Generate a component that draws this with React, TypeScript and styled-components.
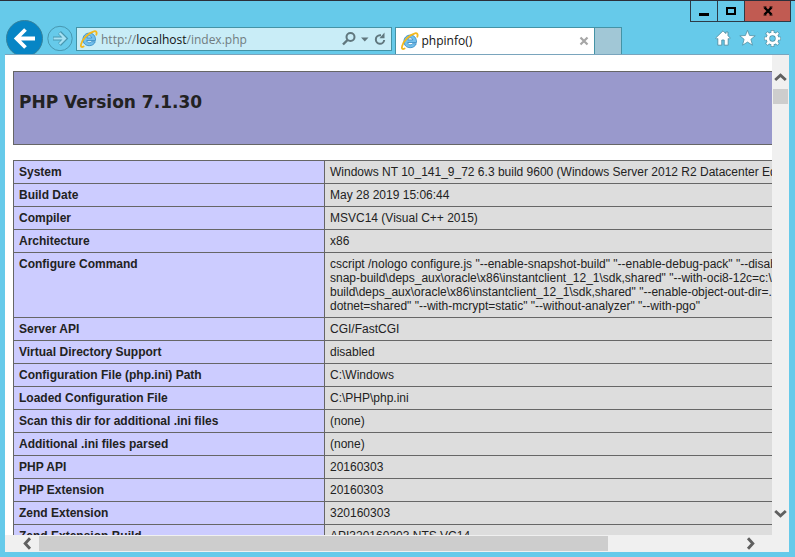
import React from "react";
import styled, { createGlobalStyle } from "styled-components";

const GlobalStyle = createGlobalStyle`
  *, *::before, *::after { box-sizing: border-box; }
  html, body { margin: 0; padding: 0; }
  body { overflow: hidden; background: #66caea; }
  button, input { font: inherit; color: inherit; margin: 0; padding: 0; border: 0; background: none; }
  svg { display: block; flex: none; }
`;

const uiFont = `"Open Sans", "Noto Sans", sans-serif`;
const pageFont = `"Liberation Sans", Arial, sans-serif`;

const Window = styled.div`
  display: flex;
  flex-direction: column;
  height: 100vh;
  padding: 0 6px 5px 5px;
  border-top: 1px solid #2b2f3a;
  background: #66caea;
  font-family: ${uiFont};
`;

const TitleBar = styled.header`
  display: flex;
  justify-content: flex-end;
  flex: none;
  height: 21px;
  margin-right: -2px;
`;

const CaptionButton = styled.button<{ $close?: boolean }>`
  display: flex;
  align-items: center;
  justify-content: center;
  width: ${(p) => (p.$close ? 47 : 28)}px;
  margin-left: -1px;
  border: 1px solid #2d3b47;
  border-top: 0;
  background: ${(p) => (p.$close ? "#c15b52" : "transparent")};
`;

const NavRow = styled.nav`
  display: flex;
  align-items: center;
  flex: none;
  height: 32px;
`;

const RoundButton = styled.button`
  display: flex;
  flex: none;
  margin-right: 3px;
`;

const AddressBar = styled.form`
  display: flex;
  align-items: center;
  align-self: flex-end;
  flex: 1 1 0;
  min-width: 0;
  height: 24px;
  margin: 0 3px 3px 0;
  padding: 0 4px 0 3px;
  border: 1px solid #4493a6;
  background: #c9edf7;
`;

const AddressField = styled.label`
  position: relative;
  flex: 1;
  min-width: 0;
  height: 22px;
  margin-left: 3px;
  font-size: 12px;
  line-height: 24px;
  color: #707c80;
`;

const AddressInput = styled.input`
  position: absolute;
  inset: 0;
  width: 100%;
  color: transparent;
  outline: none;
`;

const Host = styled.span`
  color: #111;
`;

const ToolButton = styled.button`
  display: flex;
  align-items: center;
  justify-content: center;
  flex: none;
  height: 20px;
`;

const TabStrip = styled.div`
  display: flex;
  flex: 1 1 14px;
  align-self: stretch;
  align-items: flex-end;
  min-width: 0;
`;

const Tab = styled.div`
  display: flex;
  align-items: center;
  flex: 0 1 200px;
  height: 27px;
  padding: 0 5px;
  border: 1px solid #4493a6;
  border-bottom: 0;
  background: #fff;
  font-size: 12px;
  color: #111;
`;

const TabTitle = styled.span`
  flex: 1;
  margin-left: 3px;
  line-height: 22px;
`;

const NewTab = styled.button`
  width: 27px;
  height: 27px;
  border: 1px solid #4493a6;
  border-left: 0;
  border-bottom: 0;
  background: #a1c7d6;
`;

const Tools = styled.div`
  display: flex;
  flex: none;
  gap: 8px;
  margin-right: 8px;
`;

const Content = styled.main`
  display: grid;
  grid-template-columns: minmax(0, 1fr) 17px;
  grid-template-rows: minmax(0, 1fr) 17px;
  flex: 1;
  min-height: 0;
  border-top: 1px solid #7aa5bd;
  background: #f0f0f0;
`;

const Viewport = styled.div`
  overflow: hidden;
  padding: 16px 8px;
  background: #fff;
  color: #222;
  font-family: ${pageFont};
`;

const VersionBanner = styled.header`
  width: 934px;
  height: 74px;
  padding: 17px 5px;
  border: 1px solid #666;
  background: #9999cc;
`;

const Heading = styled.h1`
  margin: 0;
  font-family: "DejaVu Sans", ${pageFont};
  font-size: 17px;
  font-weight: 700;
  line-height: 26px;
`;

const InfoTable = styled.table`
  width: 934px;
  margin-top: 15px;
  border-collapse: collapse;
  table-layout: fixed;
  font-size: 12px;
  line-height: 14px;
`;

const NameCell = styled.th`
  width: 311px;
  padding: 4px 5px;
  border: 1px solid #666;
  background: #ccccff;
  font-weight: 700;
  text-align: left;
  vertical-align: top;
`;

const ValueCell = styled.td`
  padding: 4px 5px;
  border: 1px solid #666;
  background: #ddd;
  vertical-align: top;
  white-space: pre;
`;

const Scrollbar = styled.div<{ $vertical?: boolean }>`
  display: flex;
  flex-direction: ${(p) => (p.$vertical ? "column" : "row")};
  padding: ${(p) => (p.$vertical ? "10px 1px" : "1px 10px")};
`;

const ScrollButton = styled.button<{ $vertical?: boolean }>`
  display: flex;
  align-items: center;
  justify-content: center;
  flex: none;
  width: ${(p) => (p.$vertical ? 15 : 24)}px;
  height: ${(p) => (p.$vertical ? 24 : 15)}px;
`;

const Track = styled.div<{ $vertical?: boolean }>`
  display: flex;
  flex-direction: ${(p) => (p.$vertical ? "column" : "row")};
  flex: 1;
`;

const Thumb = styled.div<{ $vertical?: boolean }>`
  flex: none;
  width: ${(p) => (p.$vertical ? "15px" : "81.4%")};
  height: 15px;
  background: #cdcdcd;
`;

const BrowserLogo = () => (
  <svg width="18" height="18" viewBox="0 0 18 18" aria-hidden="true">
    <path
      d="M15.3 11.7C14.2 14.3 12 15.7 9.2 15.7c-3.7 0-6.3-2.6-6.3-6.2 0-3.7 2.7-6.4 6.4-6.4 3.9 0 6.4 2.8 6.2 7.4H6.8c.1 1.4 1 2.3 2.5 2.3 1 0 1.8-.4 2.2-1.1zM6.9 7.9h4.8c-.2-1.3-1.1-2.1-2.4-2.1s-2.2.8-2.4 2.1z"
      fill="#74c0ec"
      stroke="#2f86c2"
      strokeWidth="0.8"
      fillRule="evenodd"
    />
    <path
      d="M3.6 16.5C1.5 17.6.5 16.7 1 14.5 2 9.5 8.6 2.500 14 1.300c2.300-.4 3.200.9 2.300 3.400"
      fill="none"
      stroke="#f3b81d"
      strokeWidth="1.800"
      strokeLinecap="round"
    />
  </svg>
);

const Chevron = ({ turn }: { turn: number }) => (
  <svg width="13" height="13" viewBox="0 0 13 13" aria-hidden="true">
    <path
      d="M1.2 9L6.5 4.2 11.8 9"
      fill="none"
      stroke="#606060"
      strokeWidth="2.9"
      transform={`rotate(${turn} 6.5 6.5)`}
    />
  </svg>
);

const configureLines = [
  'cscript /nologo configure.js "--enable-snapshot-build" "--enable-debug-pack" "--disable-zts" "--with-pdo-oci=c:\\php-',
  'snap-build\\deps_aux\\oracle\\x86\\instantclient_12_1\\sdk,shared" "--with-oci8-12c=c:\\php-snap-',
  'build\\deps_aux\\oracle\\x86\\instantclient_12_1\\sdk,shared" "--enable-object-out-dir=../obj/" "--enable-com-',
  'dotnet=shared" "--with-mcrypt=static" "--without-analyzer" "--with-pgo"',
];

const rows: [string, string][] = [
  ["System", "Windows NT 10_141_9_72 6.3 build 9600 (Windows Server 2012 R2 Datacenter Edition) i586"],
  ["Build Date", "May 28 2019 15:06:44"],
  ["Compiler", "MSVC14 (Visual C++ 2015)"],
  ["Architecture", "x86"],
  ["Configure Command", configureLines.join("\n")],
  ["Server API", "CGI/FastCGI"],
  ["Virtual Directory Support", "disabled"],
  ["Configuration File (php.ini) Path", "C:\\Windows"],
  ["Loaded Configuration File", "C:\\PHP\\php.ini"],
  ["Scan this dir for additional .ini files", "(none)"],
  ["Additional .ini files parsed", "(none)"],
  ["PHP API", "20160303"],
  ["PHP Extension", "20160303"],
  ["Zend Extension", "320160303"],
  ["Zend Extension Build", "API320160303,NTS,VC14"],
];

export default function App() {
  return (
    <Window>
      <GlobalStyle />
      <TitleBar>
        <CaptionButton aria-label="Minimize">
          <svg width="12" height="12"><path d="M1 8h10v3H1z" fill="#000" /></svg>
        </CaptionButton>
        <CaptionButton aria-label="Maximize">
          <svg width="12" height="12"><path d="M2 3h8v6H2z" fill="none" stroke="#000" strokeWidth="2" /></svg>
        </CaptionButton>
        <CaptionButton aria-label="Close" $close>
          <svg width="12" height="12"><path d="M2.5 2.5l7 7M9.5 2.5l-7 7" stroke="#000" strokeWidth="2.4" /><path d="M1.5 2h3M7.5 2h3M1.5 10h3M7.5 10h3" stroke="#000" /></svg>
        </CaptionButton>
      </TitleBar>

      <NavRow>
        <RoundButton aria-label="Back">
          <svg width="39" height="38" viewBox="0 0 39 38">
            <circle cx="19.5" cy="19.5" r="18" fill="#0685c5" stroke="#36829c" />
            <path d="M30 19.5H12M20.5 10.5L11.5 19.5L20.5 28.5" fill="none" stroke="#fff" strokeWidth="3.8" />
          </svg>
        </RoundButton>
        <RoundButton aria-label="Forward">
          <svg width="26" height="26" viewBox="0 0 26 26">
            <circle cx="13" cy="13.5" r="12.2" fill="none" stroke="#4797b0" />
            <path d="M6 13.5h12M12.5 7.5l6 6-6 6" fill="none" stroke="#4797b0" strokeWidth="4" />
            <path d="M6.5 13.5h11M12.5 8l5.5 5.5-5.5 5.5" fill="none" stroke="#a5e1f3" strokeWidth="2.2" />
          </svg>
        </RoundButton>

        <AddressBar onSubmit={(e) => e.preventDefault()}>
          <BrowserLogo />
          <AddressField>
            http://<Host>localhost</Host>/index.php
            <AddressInput aria-label="Address" type="text" />
          </AddressField>
          <ToolButton type="button" aria-label="Search">
            <svg width="16" height="16" viewBox="0 0 16 16">
              <circle cx="9.5" cy="6" r="4" fill="none" stroke="#60777e" strokeWidth="2" />
              <path d="M6.5 9L2 13.5" stroke="#60777e" strokeWidth="2.4" />
            </svg>
          </ToolButton>
          <ToolButton type="button" aria-label="Show address history">
            <svg width="16" height="16" viewBox="0 0 16 16"><path d="M4 6.5h7.5L7.75 10.5z" fill="#60777e" /></svg>
          </ToolButton>
          <ToolButton type="button" aria-label="Refresh">
            <svg width="14" height="16" viewBox="0 0 14 16">
              <path d="M8 4.300H7a4.200 4.200 0 1 0 4.200 4.700" fill="none" stroke="#60777e" strokeWidth="2" />
              <path d="M11.500 1.500v5.700H6.500z" fill="#60777e" />
            </svg>
          </ToolButton>
        </AddressBar>

        <TabStrip>
          <Tab>
            <BrowserLogo />
            <TabTitle>phpinfo()</TabTitle>
            <ToolButton aria-label="Close tab">
              <svg width="10" height="10"><path d="M1.5 1.5l7 7M8.5 1.5l-7 7" stroke="#a6a6a6" strokeWidth="2.2" /></svg>
            </ToolButton>
          </Tab>
          <NewTab aria-label="New tab" />
        </TabStrip>

        <Tools>
          <ToolButton aria-label="Home">
            <svg width="16" height="16" viewBox="0 0 16 16">
              <path d="M8 .8L.7 8l1.200 1.300.9-.8v6.700h4V10h2.400v5.200h4V8.500l.9.800L15.300 8 13 5.700V2h-2.200v1.600z" fill="#fff" stroke="#4f90a5" strokeWidth="0.9" />
            </svg>
          </ToolButton>
          <ToolButton aria-label="Favorites">
            <svg width="17" height="16" viewBox="0 0 16 16">
              <path d="M8 .3l2.100 5.200 5.600.3-4.300 3.500 1.600 5.900L8 12.100l-5 3.100 1.600-5.900L.3 5.800l5.600-.3z" fill="#fff" stroke="#4f90a5" strokeWidth="0.8" />
            </svg>
          </ToolButton>
          <ToolButton aria-label="Tools">
            <svg width="17" height="17" viewBox="0 0 16 16">
              <g fill="none" stroke="#4f90a5">
                <circle cx="8" cy="8" r="4.3" strokeWidth="3.9" />
                <path d="M8 0v3M8 13v3M0 8h3M13 8h3M2.300 2.300l2.200 2.200M11.500 11.500l2.200 2.200M13.700 2.300l-2.200 2.200M4.500 11.500l-2.200 2.200" strokeWidth="3.4" />
              </g>
              <g fill="none" stroke="#fff">
                <circle cx="8" cy="8" r="4.3" strokeWidth="2.6" />
                <path d="M8 .6v3M8 12.400v3M.6 8h3M12.400 8h3M2.700 2.700l2 2M11.300 11.300l2 2M13.300 2.700l-2 2M4.700 11.300l-2 2" strokeWidth="2.2" />
              </g>
            </svg>
          </ToolButton>
        </Tools>
      </NavRow>

      <Content>
        <Viewport>
          <VersionBanner>
            <Heading>PHP Version 7.1.30</Heading>
          </VersionBanner>
          <InfoTable>
            <tbody>
              {rows.map(([name, value]) => (
                <tr key={name}>
                  <NameCell scope="row">{name}</NameCell>
                  <ValueCell>{value}</ValueCell>
                </tr>
              ))}
            </tbody>
          </InfoTable>
        </Viewport>
        <Scrollbar $vertical>
          <ScrollButton $vertical aria-label="Scroll up"><Chevron turn={0} /></ScrollButton>
          <Track $vertical><Thumb $vertical /></Track>
          <ScrollButton $vertical aria-label="Scroll down"><Chevron turn={180} /></ScrollButton>
        </Scrollbar>
        <Scrollbar>
          <ScrollButton aria-label="Scroll left"><Chevron turn={270} /></ScrollButton>
          <Track><Thumb /></Track>
          <ScrollButton aria-label="Scroll right"><Chevron turn={90} /></ScrollButton>
        </Scrollbar>
      </Content>
    </Window>
  );
}
